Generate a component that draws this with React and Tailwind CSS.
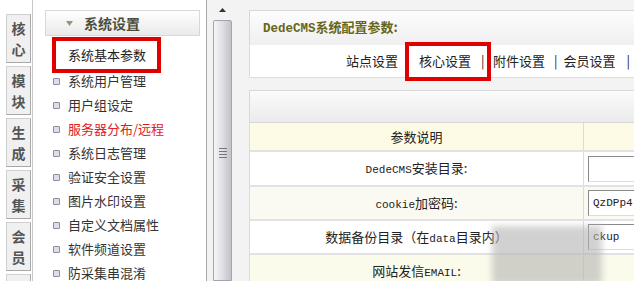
import React from 'react';

const cjk = "font-[family-name:'Noto_Sans_CJK_SC',sans-serif]";
const mono = "font-[family-name:'Liberation_Mono','Noto_Sans_CJK_SC',monospace]";

const sideTabs = ['核心', '模块', '生成', '采集', '会员', '模板'];

const menuItems = [
  { label: '系统用户管理' },
  { label: '用户组设定' },
  { label: '服务器分布/远程', red: true },
  { label: '系统日志管理' },
  { label: '验证安全设置' },
  { label: '图片水印设置' },
  { label: '自定义文档属性' },
  { label: '软件频道设置' },
  { label: '防采集串混淆' },
];

const M = ({ children }) => (
  <span className="font-[family-name:'Liberation_Mono',monospace] text-[11px]">{children}</span>
);

const rows = [
  { label: <><M>DedeCMS</M>安装目录:</>, value: '', bg: 'bg-white', h: 'h-[35px]' },
  { label: <><M>cookie</M>加密码:</>, value: 'QzDPp4', bg: 'bg-[#fafaf2]', h: 'h-[34px]' },
  { label: <>数据备份目录（在<M>data</M>目录内）</>, value: 'ckup', bg: 'bg-white', h: 'h-[34px]' },
  { label: <>网站发信<M>EMAIL</M>:</>, value: null, bg: 'bg-[#fbfbeb]', h: 'flex-1' },
];

const App = () => {
  return (
    <div className={`relative w-[634px] h-[281px] overflow-hidden flex bg-white text-[#333] ${cjk}`}>
      {/* Vertical tabs */}
      <div className="w-[33px] shrink-0 border-r border-[#c8c8c8] pt-[14px] pl-[6px] flex flex-col gap-[3px]">
        {sideTabs.map((t) => (
          <div
            key={t}
            className="w-[25px] h-[49px] shrink-0 bg-[#f0f0f0] border border-[#d0d0d0] border-r-[#a8a8a8] border-b-[#a8a8a8] flex flex-col items-center justify-center text-[14px] leading-[21px] font-semibold text-[#555]"
          >
            <span>{t[0]}</span>
            <span>{t[1]}</span>
          </div>
        ))}
      </div>

      {/* Menu sidebar */}
      <div className="w-[174px] shrink-0 border-r border-[#a8a8a8] pt-[10px]">
        <div className="ml-[12px] w-[155px] h-[26px] border border-[#d8d8d8] bg-gradient-to-b from-white to-[#eaeaea] flex items-center pl-[20px]">
          <svg width="7" height="5" viewBox="0 0 7 5" className="mr-[11px]">
            <path d="M0 0 L7 0 L3.5 5 Z" fill="#8c9c7a" />
          </svg>
          <span className="text-[14px] font-bold text-[#4d4d3d]">系统设置</span>
        </div>
        <div className="relative z-10 mt-[1px] ml-[19px] w-[109px] h-[36px] border-[4px] border-[#e00000] bg-white flex items-center pl-[12px] text-[13px] text-[#222]">
          系统基本参数
        </div>
        <div className="-mt-[4px] flex flex-col">
          {menuItems.map((m) => (
            <div key={m.label} className="h-[24px] flex items-center pl-[20px] text-[13px]">
              <span className="w-[7px] h-[7px] mr-[8px] border border-[#8a8c9c] bg-[#dcdfe8] rounded-[1px]" />
              <span className={m.red ? 'text-[#e02020]' : 'text-[#333]'}>{m.label}</span>
            </div>
          ))}
        </div>
      </div>

      {/* Scrollbar gutter */}
      <div className="w-[41px] shrink-0 bg-[#f3f3f3] flex pl-[6px]">
        <div className="w-[19px] flex flex-col">
          <div className="h-[20px] flex items-center justify-center">
            <svg width="7" height="4" viewBox="0 0 7 4">
              <path d="M0 4 L3.5 0 L7 4 Z" fill="#333" />
            </svg>
          </div>
          <div className="flex-1 border border-[#a4a4ac] rounded-t-[2px] bg-gradient-to-r from-[#f6f6f8] via-[#dedee4] to-[#c2c2ca] flex flex-col items-center pt-[127px] gap-[2px]">
            <span className="w-[8px] h-[1px] bg-[#777]" />
            <span className="w-[8px] h-[1px] bg-[#777]" />
            <span className="w-[8px] h-[1px] bg-[#777]" />
            <span className="w-[8px] h-[1px] bg-[#777]" />
          </div>
        </div>
      </div>

      {/* Main content */}
      <div className="flex-1 min-w-0 bg-[#f3f3f3] pt-[10px] pl-[1px] flex flex-col">
        <div className="h-[35px] shrink-0 border-t border-l border-[#d6d6d6] bg-gradient-to-b from-[#fdfdfd] to-[#efefef] flex items-center pl-[13px] text-[13px] font-bold text-[#66661c]">
          <span>
            <span className={`${mono} text-[12.5px]`}>DedeCMS</span>系统配置参数:
          </span>
        </div>
        <div className="h-[33px] shrink-0 bg-white border-l border-b border-[#dcdcdc] flex items-center pl-[96px] text-[13px] text-[#222] whitespace-nowrap">
          <span>站点设置</span>
          <div className="relative z-10 ml-[7px] w-[86px] h-[39px] shrink-0 border-[4px] border-[#e00000] bg-white flex items-center pl-[10px] overflow-hidden">
            <span>核心设置</span>
            <span className="ml-[10px]">|</span>
          </div>
          <span className="ml-[2px]">附件设置</span>
          <span className="ml-[9px]">|</span>
          <span className="ml-[6px]">会员设置</span>
          <span className="ml-[11px]">|</span>
        </div>
        <div className="h-[12px] shrink-0" />
        <div className="h-[32px] shrink-0 border-t border-l border-[#d8d8d8] bg-gradient-to-b from-[#fbfbfb] to-[#ebebeb]" />

        <div className="flex-1 flex flex-col border-l border-[#dcdcdc]">
          <div className="h-[28px] shrink-0 grid grid-cols-[334px_1fr] bg-[#fdfbe6] border-t border-[#d8d8d8]">
            <div className="flex items-center justify-center text-[13px] text-[#222] border-r border-[#dcdcd0]">参数说明</div>
            <div />
          </div>
          {rows.map((r, i) => (
            <div key={i} className={`${r.h} shrink-0 grid grid-cols-[334px_1fr] ${r.bg} border-t-2 border-[#e2e2e2]`}>
              <div className={`flex ${r.value === null ? 'items-start pt-[6px]' : 'items-center'} justify-center text-[13px] text-[#222] border-r border-[#dcdcd0] whitespace-nowrap`}>
                <span>{r.label}</span>
              </div>
              <div className={`flex ${r.value === null ? 'items-start' : 'items-center'} pl-[4px]`}>
                {r.value !== null && (
                  <div className={`w-[70px] h-[26px] shrink-0 bg-white border border-[#8a8a8a] border-r-[#dcdcdc] border-b-[#dcdcdc] flex items-center pl-[4px] text-[11px] text-[#222] ${mono}`}>
                    {r.value}
                  </div>
                )}
              </div>
            </div>
          ))}
        </div>
      </div>

      {/* watermark smudge */}
      <div className="absolute left-[492px] top-[226px] w-[110px] h-[58px] bg-[#b4b4b4] opacity-60 blur-[3px]" />
    </div>
  );
};

export default App;
